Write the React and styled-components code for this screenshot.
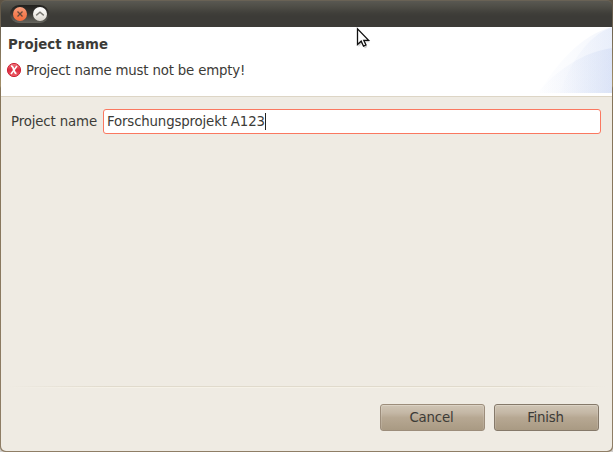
import React from "react";
import styled, { createGlobalStyle } from "styled-components";

const Global = createGlobalStyle`
  * { box-sizing: border-box; }
  html, body { margin: 0; padding: 0; background: #d2cfcc; }
  body { overflow: hidden; font: 13.33px/16px "DejaVu Sans", sans-serif; color: #3c3b37; }
`;

const Window = styled.main`
  width: 613px;
  height: 452px;
  display: flex;
  flex-direction: column;
  padding: 0 1px 1px;
  border-radius: 0 0 5px 5px;
  overflow: hidden;
  background: linear-gradient(#5d5344 0, #6f6452 28px, #a39069 86px, #857459 88px, #8f7e66 100%);
`;

const TitleBar = styled.header`
  height: 27px;
  flex: none;
  display: flex;
  align-items: flex-start;
  padding: 5px 0 0 9px;
  border-top: 1px solid #696255;
  border-radius: 5px 5px 0 0;
  background: linear-gradient(#595852 0, #504f48 5px, #403f3a 12px, #3c3b37 15px);
`;

const WindowControls = styled.div`
  width: 39px;
  height: 18px;
  margin-top: -1px;
  display: flex;
  align-items: center;
  gap: 6px;
  padding-left: 3px;
  border-radius: 9px;
  background: linear-gradient(#22211e, #34332f 45%, #67665f);
`;

const ControlButton = styled.span`
  width: 14px;
  height: 14px;
  flex: none;
  display: flex;
  align-items: center;
  justify-content: center;
  border-radius: 50%;
  background: ${(p) => (p.$close
    ? "linear-gradient(#f8a181, #f58258 45%, #f36d3d)"
    : "linear-gradient(#ffffff, #f1efea 50%, #d9d5ce)")};
`;

const Banner = styled.section`
  position: relative;
  height: 70px;
  flex: none;
  padding: 10px 0 0 7px;
  background: #fff;
  border-bottom: 1px solid #ddd5c5;
`;

const BannerArt = styled.svg`
  position: absolute;
  right: 0;
  top: 0;
`;

const Title = styled.h1`
  margin: 0;
  font-size: 13.33px;
  line-height: 16px;
  font-weight: 700;
  letter-spacing: 0.05px;
`;

const ErrorLine = styled.div`
  display: flex;
  align-items: center;
  gap: 4px;
  height: 16px;
  margin: 10px 0 0 -2px;
  letter-spacing: -0.18px;
`;

const Body = styled.section`
  flex: 1;
  display: flex;
  flex-direction: column;
  background: #efebe3;
  border-radius: 0 0 5px 5px;
`;

const FieldRow = styled.label`
  display: flex;
  align-items: center;
  justify-content: space-between;
  padding: 12px 11px 0 10px;
  letter-spacing: -0.14px;
`;

const Field = styled.div`
  width: 498px;
  height: 25px;
  display: flex;
  align-items: center;
  padding-left: 3px;
  background: #fff;
  border: 1px solid #fa7860;
  border-radius: 3px;
  letter-spacing: -0.16px;
`;

const Caret = styled.span`
  width: 1px;
  height: 17px;
  background: #222;
`;

const Separator = styled.hr`
  width: 100%;
  height: 2px;
  margin: auto 0 0;
  border: 0;
  background:
    linear-gradient(90deg, transparent 1%, #e0dacc 18%, #e0dacc 82%, transparent 99%) 0 0 / 100% 1px no-repeat,
    linear-gradient(90deg, transparent 1%, #f6f2e8 18%, #f6f2e8 82%, transparent 99%) 0 1px / 100% 1px no-repeat;
`;

const Actions = styled.footer`
  height: 63px;
  display: flex;
  justify-content: flex-end;
  gap: 9px;
  padding: 16px 13px 0 0;
`;

const ActionButton = styled.button`
  width: 105px;
  height: 27px;
  padding: 1px 2px 0 0;
  border: 1px solid ${(p) => (p.$primary ? "#85796a" : "#9c8d7b")};
  border-radius: 3px;
  background: linear-gradient(#d0c5b5, #c4b7a5 32%, #b7a893 50%, #a99a83);
  box-shadow: inset 0 1px #dbd2c4, inset 1px 0 #ffffff20, inset -1px 0 #ffffff20;
  color: #3c3b37;
  font: 13.33px/16px "DejaVu Sans", sans-serif;
  letter-spacing: -0.2px;
`;

const Pointer = styled.svg`
  position: absolute;
  left: 356px;
  top: 27px;
`;

const ErrorGlyph = styled.svg`
  flex: none;
  margin-bottom: 2px;
`;

const ErrorIcon = () => (
  <ErrorGlyph width="16" height="16" viewBox="0 0 16 16">
    <defs>
      <linearGradient id="red" x2="0" y2="1">
        <stop stopColor="#f07b80" />
        <stop offset=".5" stopColor="#dc2c40" />
        <stop offset="1" stopColor="#ef6269" />
      </linearGradient>
    </defs>
    <circle cx="8" cy="8" r="6.6" fill="url(#red)" stroke="#cd2638" />
    <path d="M5 4.2q1.3-.3 2 1.5l1.4 3.7q.7 2 2.1 2.2" fill="none" stroke="#fff" strokeWidth="1.8" />
    <path d="M11 4L5 12" stroke="#fff" strokeWidth="1.5" />
  </ErrorGlyph>
);

const Swoosh = () => (
  <BannerArt width="76" height="66" viewBox="0 0 76 66">
    <defs>
      <linearGradient id="fade" gradientUnits="userSpaceOnUse" x1="0" x2="76" y1="0" y2="0">
        <stop stopColor="#b9caf0" stopOpacity=".01" />
        <stop offset=".45" stopColor="#b9caf0" stopOpacity=".07" />
        <stop offset="1" stopColor="#b9caf0" stopOpacity=".17" />
      </linearGradient>
      <linearGradient id="inner" gradientUnits="userSpaceOnUse" x1="20" x2="76" y1="0" y2="0">
        <stop stopColor="#b9caf0" stopOpacity="0" />
        <stop offset="1" stopColor="#b9caf0" stopOpacity=".18" />
      </linearGradient>
      <linearGradient id="low" gradientUnits="userSpaceOnUse" x1="0" x2="76" y1="0" y2="0">
        <stop stopColor="#b0c2ec" stopOpacity="0" />
        <stop offset=".5" stopColor="#b0c2ec" stopOpacity=".1" />
        <stop offset="1" stopColor="#b0c2ec" stopOpacity=".23" />
      </linearGradient>
    </defs>
    <path d="M3 66C20 37 45 8 76 0V66z" fill="url(#fade)" />
    <path d="M24 66C34 36 51 9 76 0V66z" fill="url(#inner)" />
    <path d="M1 66C21 43 47 25 76 21V66z" fill="url(#low)" />
  </BannerArt>
);

export default function App() {
  return (
    <>
      <Global />
      <Window>
        <TitleBar>
          <WindowControls>
            <ControlButton $close>
              <svg width="8" height="8"><path d="M1.5 1.5l5 5m0-5l-5 5" stroke="#63483a" strokeWidth="1.3" /></svg>
            </ControlButton>
            <ControlButton>
              <svg width="10" height="8"><path d="M1.2 5.4L5 2.2l3.8 3.2" fill="none" stroke="#7b7973" strokeWidth="1.4" /></svg>
            </ControlButton>
          </WindowControls>
        </TitleBar>
        <Banner>
          <Title>Project name</Title>
          <ErrorLine><ErrorIcon />Project name must not be empty!</ErrorLine>
          <Swoosh />
        </Banner>
        <Body>
          <FieldRow>
            Project name
            <Field>Forschungsprojekt A123<Caret /></Field>
          </FieldRow>
          <Separator />
          <Actions>
            <ActionButton>Cancel</ActionButton>
            <ActionButton $primary>Finish</ActionButton>
          </Actions>
        </Body>
      </Window>
      <Pointer width="16" height="24" viewBox="0 0 16 24">
        <path d="M2.5 3.5V20l3.7-3.6 2.6 5 2.5-1.3-2.4-4.8h5.2z" fill="#555" opacity=".25" />
        <path d="M1.5 1.8V17.6l3.7-3.4 2.3 5 2.5-1.2-2.2-4.7h4.8z" fill="#fff" stroke="#111" strokeWidth="1.3" />
      </Pointer>
    </>
  );
}
